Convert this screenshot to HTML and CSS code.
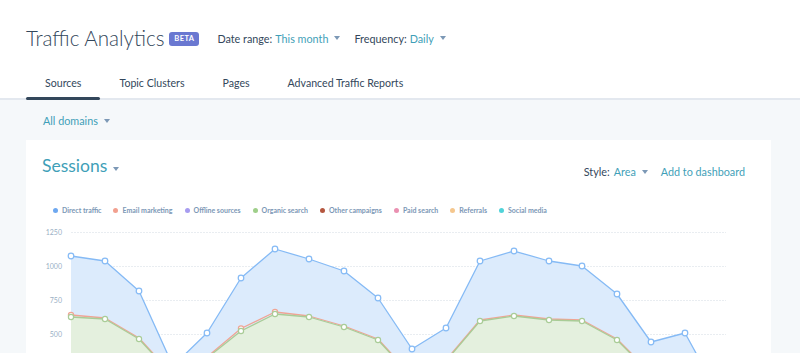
FILE: index.html
```html
<!DOCTYPE html>
<html lang="en">
<head>
    <meta charset="UTF-8">
    <meta name="viewport" content="width=device-width, initial-scale=1.0">
    <title>Traffic Analytics</title>
    <link rel="stylesheet" href="styles.css">
</head>
<body>
    <header class="page-header">
        <div class="title-row">
            <h1 class="title">Traffic Analytics</h1>
            <span class="badge">BETA</span>
            <div class="filter">
                <span class="filter-label">Date range:</span>
                <span class="link">This month</span>
                <span class="caret"></span>
            </div>
            <div class="filter">
                <span class="filter-label">Frequency:</span>
                <span class="link">Daily</span>
                <span class="caret"></span>
            </div>
        </div>

        <nav class="tabs">
            <a class="tab active">Sources</a>
            <a class="tab">Topic Clusters</a>
            <a class="tab">Pages</a>
            <a class="tab">Advanced Traffic Reports</a>
        </nav>
    </header>

    <main class="content">
        <div class="domain-bar">
            <span class="link">All domains</span>
            <span class="caret"></span>
        </div>

        <section class="card">
            <div class="card-head">
                <h2 class="card-title">Sessions <span class="caret"></span></h2>
                <div class="card-actions">
                    <span class="filter-label">Style:</span>
                    <span class="link">Area</span>
                    <span class="caret"></span>
                    <span class="link add-link">Add to dashboard</span>
                </div>
            </div>

            <ul class="legend">
                <li><span class="dot direct"></span>Direct traffic</li>
                <li><span class="dot email"></span>Email marketing</li>
                <li><span class="dot offline"></span>Offline sources</li>
                <li><span class="dot organic"></span>Organic search</li>
                <li><span class="dot other"></span>Other campaigns</li>
                <li><span class="dot paid"></span>Paid search</li>
                <li><span class="dot referrals"></span>Referrals</li>
                <li><span class="dot social"></span>Social media</li>
            </ul>

            <svg class="chart" width="745" height="140" viewBox="0 0 745 140">
                <!-- grid -->
                <g class="grid">
                    <line x1="45" y1="15.5" x2="700" y2="15.5"/>
                    <line x1="45" y1="49.5" x2="700" y2="49.5"/>
                    <line x1="45" y1="83.5" x2="700" y2="83.5"/>
                    <line x1="45" y1="117.5" x2="700" y2="117.5"/>
                </g>
                <g class="axis">
                    <text x="36" y="18">1250</text>
                    <text x="36" y="52">1000</text>
                    <text x="36" y="86">750</text>
                    <text x="36" y="120">500</text>
                </g>

                <!-- direct traffic -->
                <polygon class="area-blue" points="45,39 79,44 113,74 147,149 181,116 215,61 249,32 283,42 318,54 352,81 386,132 420,111 454,44 488,34 523,44 556,49 591,77 625,125 659,116 694,180 694,186 45,186"/>
                <polyline class="line-blue" points="45,39 79,44 113,74 147,149 181,116 215,61 249,32 283,42 318,54 352,81 386,132 420,111 454,44 488,34 523,44 556,49 591,77 625,125 659,116 694,180"/>

                <!-- organic search + email marketing -->
                <polygon class="area-green" points="45,99 79,102 113,122 147,159 181,141 215,114 249,97 283,100 318,110 352,123 386,160 420,144 454,104 488,99 523,103 556,104 591,123 625,157 659,153 694,163 694,186 45,186"/>
                <polyline class="line-red" points="45,98 79,101 113,121 147,158 181,140 215,111.5 249,95 283,99 318,109 352,122 386,159 420,143 454,103 488,98 523,102 556,103 591,122 625,156 659,152 694,162"/>
                <polyline class="line-green" points="45,100 79,102 113,122 147,159 181,141 215,114 249,97 283,100 318,110 352,123 386,160 420,144 454,104 488,99 523,103 556,104 591,123 625,157 659,153 694,163"/>

                <g class="marks-red">
                    <circle cx="45" cy="98" r="2.6"/>
                    <circle cx="215" cy="111.5" r="2.6"/>
                    <circle cx="249" cy="95" r="2.6"/>
                </g>
                <g class="marks-green">
                    <circle cx="45" cy="100" r="2.6"/>
                    <circle cx="79" cy="102" r="2.6"/>
                    <circle cx="113" cy="122" r="2.6"/>
                    <circle cx="215" cy="114" r="2.6"/>
                    <circle cx="249" cy="97" r="2.6"/>
                    <circle cx="283" cy="100" r="2.6"/>
                    <circle cx="318" cy="110" r="2.6"/>
                    <circle cx="352" cy="123" r="2.6"/>
                    <circle cx="454" cy="104" r="2.6"/>
                    <circle cx="488" cy="99" r="2.6"/>
                    <circle cx="523" cy="103" r="2.6"/>
                    <circle cx="556" cy="104" r="2.6"/>
                    <circle cx="591" cy="123" r="2.6"/>
                </g>
                <g class="marks-blue">
                    <circle cx="45" cy="39" r="2.8"/>
                    <circle cx="79" cy="44" r="2.8"/>
                    <circle cx="113" cy="74" r="2.8"/>
                    <circle cx="181" cy="116" r="2.8"/>
                    <circle cx="215" cy="61" r="2.8"/>
                    <circle cx="249" cy="32" r="2.8"/>
                    <circle cx="283" cy="42" r="2.8"/>
                    <circle cx="318" cy="54" r="2.8"/>
                    <circle cx="352" cy="81" r="2.8"/>
                    <circle cx="386" cy="132" r="2.8"/>
                    <circle cx="420" cy="111" r="2.8"/>
                    <circle cx="454" cy="44" r="2.8"/>
                    <circle cx="488" cy="34" r="2.8"/>
                    <circle cx="523" cy="44" r="2.8"/>
                    <circle cx="556" cy="49" r="2.8"/>
                    <circle cx="591" cy="77" r="2.8"/>
                    <circle cx="625" cy="125" r="2.8"/>
                    <circle cx="659" cy="116" r="2.8"/>
                </g>
            </svg>
        </section>
    </main>
</body>
</html>
```

FILE: styles.css
```css
body {
    margin: 0;
    font-family: Lato, "Open Sans", sans-serif;
    background-color: #f5f8fa;
    color: #33475b;
    overflow: hidden;
}

.page-header {
    background-color: #fff;
    padding: 22px 26px 0;
    border-bottom: 2px solid #e3e8ef;
}

.title-row {
    display: flex;
    align-items: center;
    height: 32px;
}

.title {
    margin: 0;
    font-size: 20.6px;
    font-weight: 300;
    color: #33475b;
}

.badge {
    margin-left: 5px;
    margin-top: 1px;
    width: 30px;
    height: 14px;
    line-height: 14px;
    text-align: center;
    border-radius: 3px;
    background-color: #6a78d1;
    color: #fff;
    font-size: 7.5px;
    font-weight: 700;
    letter-spacing: 0.4px;
}

.filter {
    display: flex;
    align-items: center;
    margin-left: 18px;
    font-size: 10.8px;
}

.filter + .filter {
    margin-left: 14px;
}

.filter-label {
    margin-right: 3px;
}

.link {
    color: #3f9fb8;
}

.caret {
    display: inline-block;
    width: 0;
    height: 0;
    margin-left: 6px;
    border-top: 4px solid #7c98b6;
    border-left: 3.5px solid transparent;
    border-right: 3.5px solid transparent;
    vertical-align: middle;
}

.tabs {
    display: flex;
    margin-top: 12px;
}

.tab {
    position: relative;
    padding: 10px 19px 7px;
    line-height: 15px;
    font-size: 10.6px;
    color: #33475b;
}

.tab.active::after {
    content: "";
    position: absolute;
    left: 0;
    right: 0;
    bottom: -2px;
    height: 3.5px;
    border-radius: 2px;
    background-color: #33475b;
}

.content {
    padding: 0 29px 0 26px;
}

.domain-bar {
    display: flex;
    align-items: center;
    padding: 13px 17px 12px;
    line-height: 15px;
    font-size: 10.8px;
}

.card {
    background-color: #fff;
    padding-top: 14px;
}

.card-head {
    display: flex;
    justify-content: space-between;
    align-items: center;
    padding: 0 26px 0 16px;
}

.card-title {
    margin: 0;
    font-size: 17.5px;
    font-weight: 400;
    line-height: 24px;
    color: #3f9fb8;
}

.card-title .caret {
    margin-left: 1px;
    vertical-align: 1px;
}

.card-actions {
    display: flex;
    align-items: center;
    margin-top: 11px;
    font-size: 10.8px;
}

.card-actions .filter-label {
    margin-right: 4px;
}

.add-link {
    margin-left: 13px;
}

.legend {
    display: flex;
    gap: 12px;
    list-style: none;
    margin: 26px 0 0;
    padding: 0 0 0 27px;
    font-size: 7px;
    font-weight: 700;
    line-height: 12px;
    color: #7c98b6;
}

.legend li {
    display: flex;
    align-items: center;
}

.dot {
    width: 5px;
    height: 5px;
    border-radius: 50%;
    margin-right: 4px;
}

.direct { background-color: #6ea8f0; }
.email { background-color: #f2a08f; }
.offline { background-color: #a79cf0; }
.organic { background-color: #9fcf8a; }
.other { background-color: #b5573f; }
.paid { background-color: #ea90b1; }
.referrals { background-color: #f5c78e; }
.social { background-color: #51d3d9; }

.chart {
    display: block;
    margin-top: 1px;
}

.grid line {
    stroke: #e9edf1;
    stroke-width: 1;
    stroke-dasharray: 2 1;
}

.axis text {
    font-size: 7px;
    fill: #99afc4;
    text-anchor: end;
}

.area-blue { fill: #dcebfc; }
.area-green { fill: #e4f0de; }

.line-blue, .line-green, .line-red {
    fill: none;
    stroke-width: 1.3;
    stroke-linejoin: round;
}

.line-blue { stroke: #85baf5; }
.line-green { stroke: #a9cc97; }
.line-red { stroke: #f0a494; }

.marks-blue circle, .marks-green circle, .marks-red circle {
    fill: #fff;
    stroke-width: 1.2;
}

.marks-blue circle { stroke: #85baf5; }
.marks-green circle { stroke: #a9cc97; }
.marks-red circle { stroke: #f0a494; }
```
